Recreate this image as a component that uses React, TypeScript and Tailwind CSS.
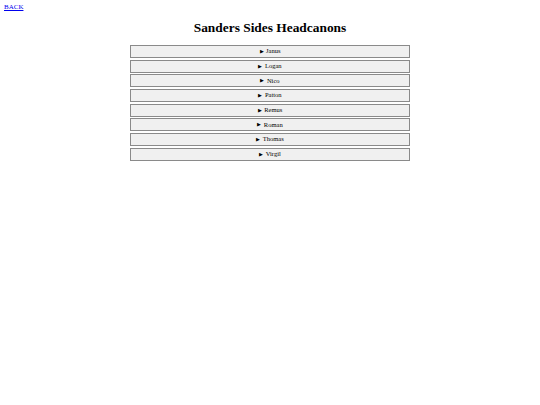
const sides = ["Janus", "Logan", "Nico", "Patton", "Remus", "Roman", "Thomas", "Virgil"];

export default function App() {
  return (
    <div className="min-h-[405px] bg-white text-black" style={{ fontFamily: '"Liberation Serif", "Times New Roman", serif' }}>
      <div className="pl-[4px] pt-[3px] text-[7px] leading-[8px]">
        <a href="#" className="text-[#0000ee] underline">BACK</a>
      </div>
      <h1 className="mt-[9px] text-center text-[13.4px] font-bold leading-[16px]">Sanders Sides Headcanons</h1>
      <div className="mx-auto mt-[9px] flex w-[280px] flex-col gap-[1.7px]">
        {sides.map((s) => (
          <div
            key={s}
            className="flex h-[13px] items-center justify-center border border-[#8a8a8a] bg-[#f0f0f0] text-[6.5px] leading-none"
          >
            <span className="mr-[2.5px] text-[5px]">▶</span>
            {s}
          </div>
        ))}
      </div>
    </div>
  );
}
